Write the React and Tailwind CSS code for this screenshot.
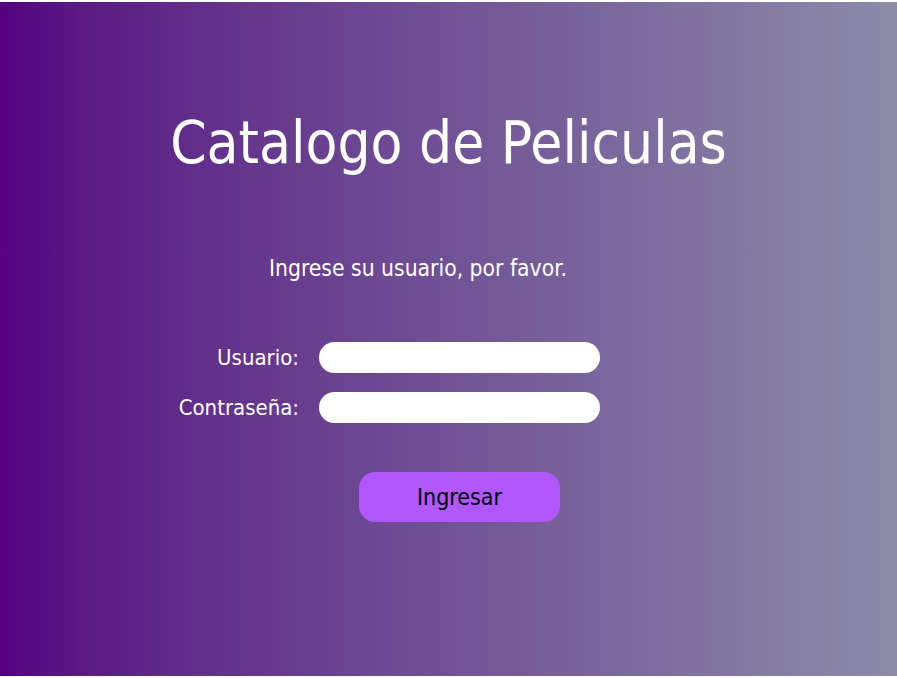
import React from 'react'

const font = { fontFamily: '"DejaVu Sans Condensed", "DejaVu Sans", sans-serif' }

const Field = ({ label, type = 'text', autoFocus }) => (
  <div className="flex h-[31px] items-center">
    <label className="w-[319px] pr-[20px] text-right text-[22px] leading-[26px] text-white box-border">{label}</label>
    <input
      type={type}
      autoFocus={autoFocus}
      className="block w-[281px] h-[31px] rounded-full bg-white px-[2px] outline-none border-0 text-black"
    />
  </div>
)

const App = () => {
  return (
    <div className="pt-[2px] pb-[2px] bg-white" style={font}>
      <div className="h-[674px] w-full bg-gradient-to-r from-[#550080] to-[#8c8ca8]">
        <h1 className="pt-[112px] text-center text-[58px] leading-[1] text-white">Catalogo de Peliculas</h1>
        <p className="mt-[83px] pl-[269px] text-[22.7px] leading-[26px] text-white">Ingrese su usuario, por favor.</p>
        <div className="mt-[61px] flex flex-col gap-[19px]">
          <Field label="Usuario:" autoFocus />
          <Field label="Contraseña:" type="password" />
        </div>
        <div className="mt-[49px] pl-[359px]">
          <button className="w-[201px] h-[50px] rounded-[16px] bg-[#b057ff] text-[23px] text-black">Ingresar</button>
        </div>
      </div>
    </div>
  )
}

export default App
